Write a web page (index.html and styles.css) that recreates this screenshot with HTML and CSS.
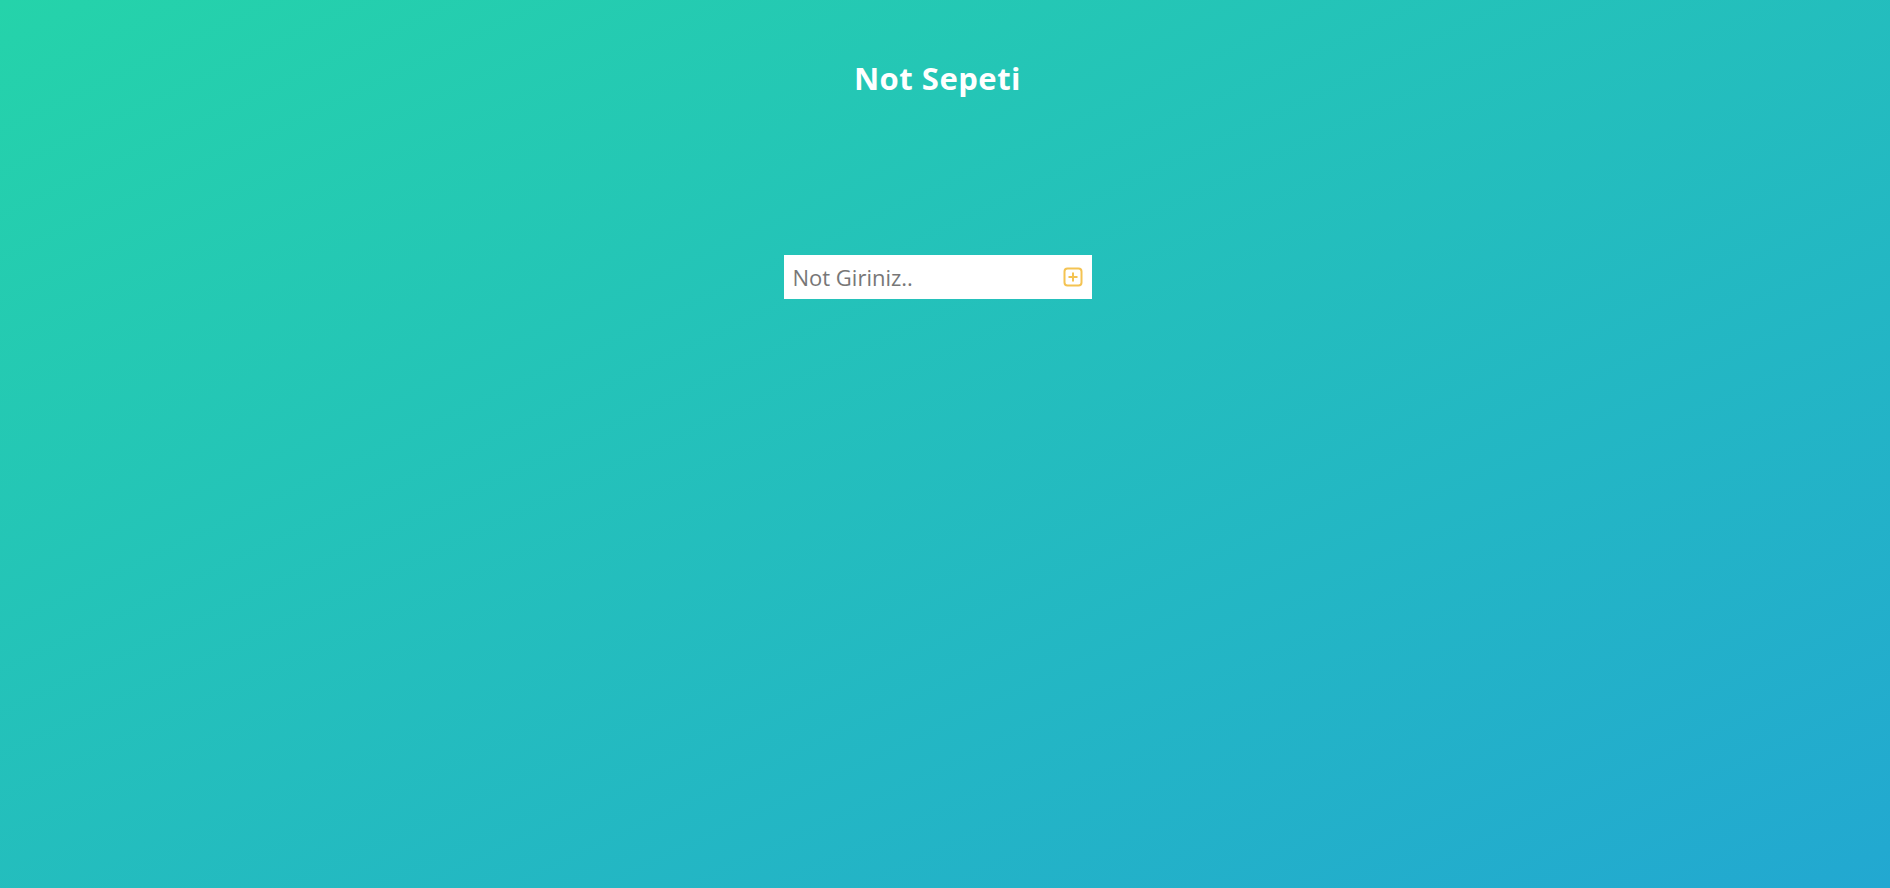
FILE: index.html
```html
<!DOCTYPE html>
<html lang="tr">
<head>
<meta charset="utf-8">
<title>Not Sepeti</title>
<link rel="stylesheet" href="styles.css">
</head>
<body>
<div class="app">
  <h1 class="title">Not Sepeti</h1>
  <form class="note-form">
    <input class="note-input" type="text" placeholder="Not Giriniz..">
    <button class="add-btn" type="button" aria-label="Ekle">
      <svg width="20" height="20" viewBox="0 0 20 20" fill="none" stroke="#f4c352" stroke-width="2">
        <rect x="1.5" y="1.5" width="17" height="17" rx="3"/>
        <path d="M10 5.5v9M5.5 10h9"/>
      </svg>
    </button>
  </form>
</div>
</body>
</html>
```
FILE: styles.css
```css
html, body {
  margin: 0;
  padding: 0;
  height: 100%;
}
body {
  background: linear-gradient(to bottom right, #25d3aa, #22a8d1);
  font-family: "Open Sans", "Noto Sans", sans-serif;
}
.app {
  display: flex;
  flex-direction: column;
  align-items: center;
  padding-top: 56px;
  padding-right: 15px;
}
.title {
  margin: 0;
  color: #fff;
  font-size: 31px;
  font-weight: 700;
  letter-spacing: 0.5px;
  line-height: 44px;
}
.note-form {
  display: flex;
  align-items: center;
  background: #fff;
  width: 308px;
  height: 44px;
  margin-top: 155px;
  box-sizing: border-box;
  padding: 0 9px 0 9px;
}
.note-input {
  flex: 1;
  border: none;
  outline: none;
  font-family: "Open Sans", "Noto Sans", sans-serif;
  font-size: 22px;
  color: #666;
  padding: 0;
  min-width: 0;
  background: transparent;
}
.note-input::placeholder {
  color: #777;
}
.add-btn {
  border: none;
  background: none;
  padding: 0;
  display: flex;
  cursor: pointer;
}
```
